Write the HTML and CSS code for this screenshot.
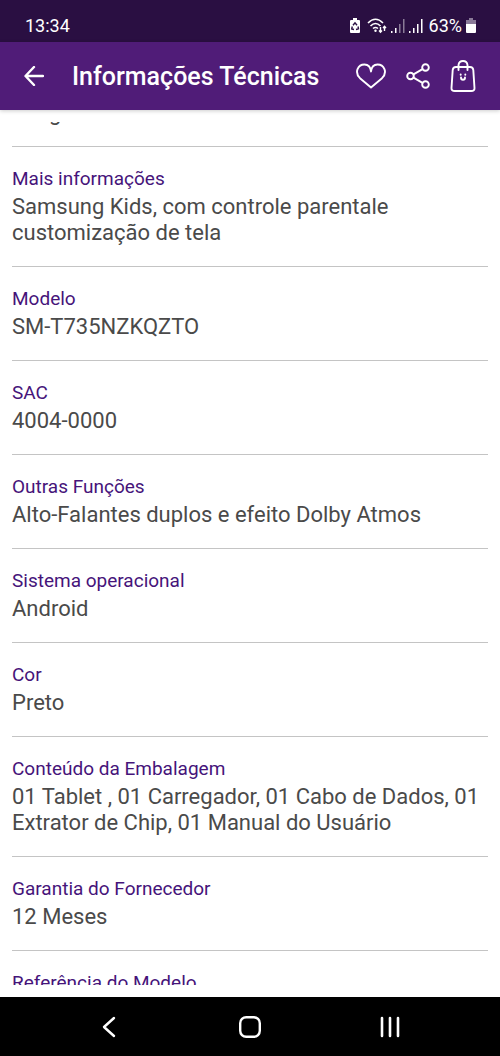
FILE: index.html
```html
<!DOCTYPE html>
<html lang="pt-BR">
<head>
<meta charset="utf-8">
<meta name="viewport" content="width=device-width, initial-scale=1">
<title>Informações Técnicas</title>
<link rel="stylesheet" href="styles.css">
</head>
<body>
<div class="status">
  <span>13:34</span>
  <div class="status-icons">
    <svg width="12" height="16" viewBox="0 0 12 16"><path fill="#fff" d="M4 0h4v2h2q1 0 1 1v11q0 1-1 1H2q-1 0-1-1V3q0-1 1-1h2z"/><path d="M4 7.2 6 4.8l2 2.4M9 8.5l.5 2.3-2.5.7M5 11.5 2.7 11 3.3 8.5" fill="none" stroke="#2a0f42" stroke-width="1.4"/></svg>
    <svg class="wifi" width="20" height="16" viewBox="0 0 20 16" fill="none" stroke="#fff" stroke-width="1.6"><path d="M1 5Q8.500-2.500 16 5M3.500 8Q8.500 3 13.500 8M6 10.500Q8.500 8.500 11 10.500"/><circle cx="8.500" cy="12.800" r="1.200" fill="#fff" stroke="none"/><path stroke-width="1.400" d="M13.500 9v5M12 12.500l1.500 1.700 1.500-1.700M17.500 13V8.500M16 10l1.500-1.700L19 10"/></svg>
    <svg width="14" height="16" viewBox="0 0 14 16" fill="#fff"><path d="M0 13h1.500v2H0zM4 10h1.500v5H4z"/><path opacity=".45" d="M8 6h1.500v9H8zM12 1h1.500v14H12z"/></svg>
    <svg class="signal" width="14" height="16" viewBox="0 0 14 16" fill="#fff"><path d="M0 13h1.500v2H0zM4 10h1.500v5H4zM8 6h1.500v9H8zM12 1h1.500v14H12z"/></svg>
    <span>63%</span>
    <svg width="10" height="16" viewBox="0 0 10 16"><path fill="#8a7a98" d="M3 0h4v2h3v5H0V2h3z"/><path fill="#fff" d="M0 6h10v8q0 1-1 1H1q-1 0-1-1z"/></svg>
  </div>
</div>
<header class="bar">
  <button class="icon" aria-label="Voltar"><svg width="20" height="20" viewBox="0 0 20 20"><path d="M19 10H2M10 1 1.500 10l8.500 9" stroke-width="2.400"/></svg></button>
  <h1>Informações Técnicas</h1>
  <button class="icon" aria-label="Favoritar"><svg width="30" height="26" viewBox="0 0 30 26"><path d="M15 24.500 4 15.200C-2 9 2 1.500 8.500 1.500c3.500 0 6 2.500 6.500 7 .5-4.500 3-7 6.500-7C28 1.500 32 9 26 15.200z"/></svg></button>
  <button class="icon" aria-label="Compartilhar"><svg width="24" height="26" viewBox="0 0 24 26"><circle cx="4.500" cy="13" r="3.300"/><circle cx="19.500" cy="4.500" r="3.300"/><circle cx="19.500" cy="21.500" r="3.300"/><path d="m7.500 11.300 9-5.100M7.500 14.700l9 5.100"/></svg></button>
  <button class="icon" aria-label="Sacola"><svg width="26" height="34" viewBox="0 0 26 34"><path d="M6 8h14q3 0 3.300 3L24.500 29q.2 3-3.300 3H4.800Q1.300 32 1.500 29L2.700 11q.3-3 3.300-3z"/><path d="M8.500 11V6Q9 2 13 2t4.500 4v5"/><path d="M11 18.500Q11 20.800 13 20.800t2-2.300M10.700 15.500v.2M15.300 15.500v.2"/></svg></button>
</header>
<main>
  <dl class="specs">
    <div class="spec first"><dd>510g</dd></div>
    <div class="spec"><dt>Mais informações</dt><dd>Samsung Kids, com controle parentale customização de tela</dd></div>
    <div class="spec"><dt>Modelo</dt><dd>SM-T735NZKQZTO</dd></div>
    <div class="spec"><dt>SAC</dt><dd>4004-0000</dd></div>
    <div class="spec"><dt>Outras Funções</dt><dd>Alto-Falantes duplos e efeito Dolby Atmos</dd></div>
    <div class="spec"><dt>Sistema operacional</dt><dd>Android</dd></div>
    <div class="spec"><dt>Cor</dt><dd>Preto</dd></div>
    <div class="spec"><dt>Conteúdo da Embalagem</dt><dd>01 Tablet , 01 Carregador, 01 Cabo de Dados, 01 Extrator de Chip, 01 Manual do Usuário</dd></div>
    <div class="spec"><dt>Garantia do Fornecedor</dt><dd>12 Meses</dd></div>
    <div class="spec"><dt>Referência do Modelo</dt></div>
  </dl>
</main>
<nav class="nav">
  <button class="icon" aria-label="Anterior"><svg width="22" height="22" viewBox="0 0 22 22"><path d="M15 2 5 11l10 9" stroke-width="2.400"/></svg></button>
  <button class="icon" aria-label="Início"><svg width="22" height="22" viewBox="0 0 22 22"><rect x="1.200" y="1.200" width="19.600" height="19.600" rx="6" stroke-width="2.400"/></svg></button>
  <button class="icon" aria-label="Recentes"><svg width="22" height="22" viewBox="0 0 22 22"><path d="M3 2v18M11 2v18M19 2v18" stroke-width="2.600"/></svg></button>
</nav>
</body>
</html>
```
FILE: styles.css
```css
* { box-sizing: border-box; }
body {
  margin: 0;
  height: 100vh;
  display: flex;
  flex-direction: column;
  background: #fff;
  font-family: Roboto, sans-serif;
}
.status {
  height: 42px;
  flex: none;
  padding: 9px 24px 0 25px;
  display: flex;
  justify-content: space-between;
  align-items: center;
  background: #2a0f42;
  color: #fff;
  font-size: 18px;
}
.status-icons { display: flex; align-items: center; gap: 4px; }
.wifi { margin-left: 2px; }
.signal { margin: 0 2px 0 0; }
.bar {
  height: 68px;
  flex: none;
  display: flex;
  align-items: center;
  gap: 20px;
  padding: 0 24px;
  background: #501c78;
  color: #fff;
  box-shadow: 0 1px 4px rgba(0, 0, 0, .2);
}
h1 { flex: 1; margin: 0 0 0 8px; font-size: 25px; font-weight: 500; white-space: nowrap; }
.icon { display: flex; padding: 0; border: 0; background: none; color: #fff; }
.icon svg {
  fill: none;
  stroke: currentColor;
  stroke-width: 1.9;
  stroke-linecap: round;
  stroke-linejoin: round;
}
main { flex: 1; min-height: 0; display: flex; padding: 12px; }
.specs { flex: 1; margin: 0; overflow: hidden; }
.spec { padding: 21px 0 20px; border-bottom: 1px solid #c4c4c4; }
.first { margin-top: -47px; }
dt { color: #46147a; font-size: 19px; line-height: 22px; }
dd { margin: 4px 0 0; color: #4a4a4a; font-size: 22px; line-height: 26px; }
.nav {
  height: 59px;
  flex: none;
  display: flex;
  justify-content: center;
  align-items: center;
  gap: 118px;
  background: #000;
}
```
